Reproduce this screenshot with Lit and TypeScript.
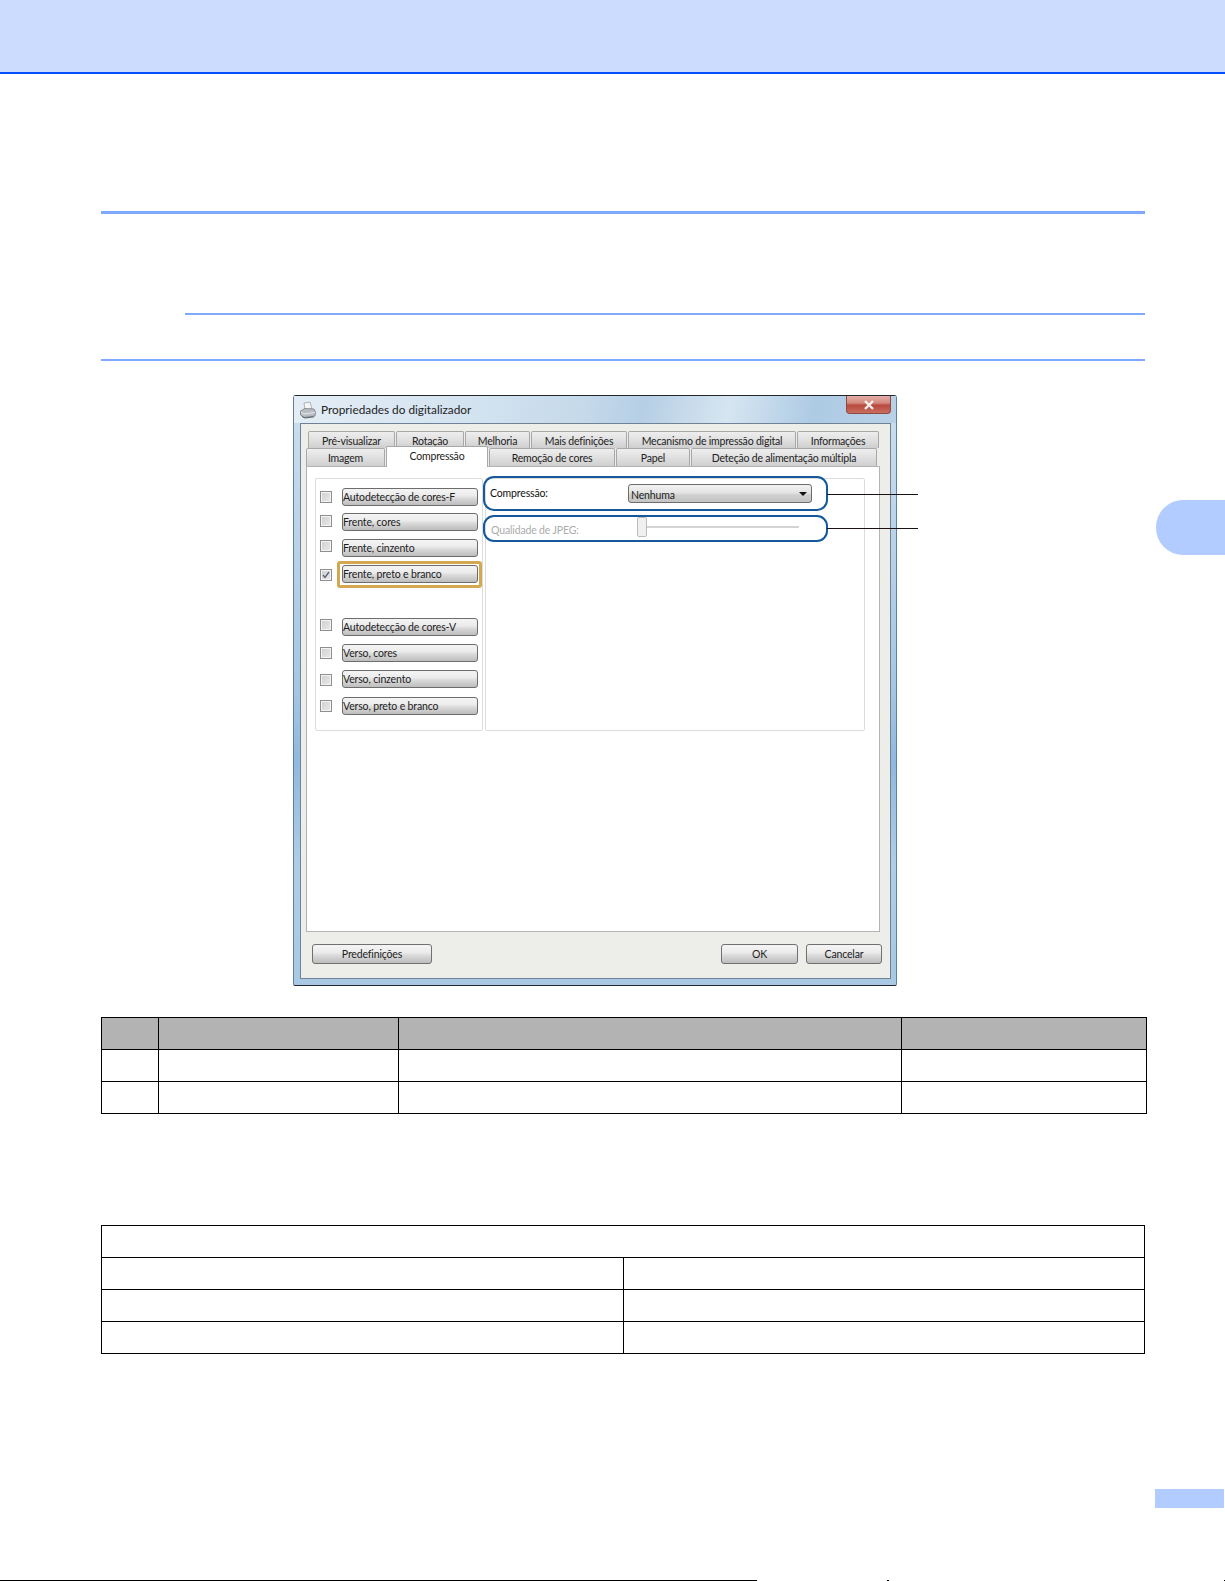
import { LitElement, html, css, svg } from "lit";
import { customElement } from "lit/decorators.js";

const row1 = [
  ["Pré-visualizar", 87], ["Rotação", 68], ["Melhoria", 65], ["Mais definições", 96], ["Mecanismo de impressão digital", 168], ["Informações", 82],
] as const;
const row2 = [
  ["Imagem", 79], ["Compressão", 102], ["Remoção de cores", 126], ["Papel", 74], ["Deteção de alimentação múltipla", 186],
] as const;
/* label, checked, focused, space under the row, nudge of the checkbox */
const options = [
  ["Autodetecção de cores-F", false, false, 7, 0],
  ["Frente, cores", false, false, 8, -1],
  ["Frente, cinzento", false, false, 8, -2],
  ["Frente, preto e branco", true, true, 35, 1],
  ["Autodetecção de cores-V", false, false, 8, -2],
  ["Verso, cores", false, false, 8, 0],
  ["Verso, cinzento", false, false, 9, 1],
  ["Verso, preto e branco", false, false, 0, 0],
] as const;

@customElement("app-root")
export class AppRoot extends LitElement {
  static styles = css`
    :host { display: block; width: 1225px; height: 1581px; background: #fff; overflow: hidden; font-family: "Lato", "Open Sans", "Liberation Sans", sans-serif; color: #111; }
    .page { position: relative; display: flex; flex-direction: column; height: 1581px; }
    .top { height: 72px; background: #ccdcff; border-bottom: 2px solid #0050ff; flex: none; }
    .rule { background: #80a8ff; flex: none; margin-left: 101px; width: 1044px; }
    .r1 { height: 3px; margin-top: 137px; }
    .r2 { height: 2px; margin-top: 99px; margin-left: 185px; width: 960px; }
    .r3 { height: 2px; margin-top: 44px; }
    .side { position: absolute; left: 1156px; top: 500px; width: 69px; height: 55px; background: #b3ccff; border-radius: 27px 0 0 27px; }

    .dialog { position: relative; flex: none; margin: 34px 0 0 293px; width: 604px; height: 591px; box-sizing: border-box; border: 1px solid #5f7f9d; border-top-color: #23262b; border-bottom-color: #23262b; border-radius: 3px 3px 2px 2px;
      background: linear-gradient(180deg, #dbe7f1 0, #c9dcec 5%, #b5d0e7 30%, #a5c6e3 50%, #8fb9de 62%, #b0cde6 80%, #a8c8e3 100%); display: flex; flex-direction: column; }
    .titlebar { height: 27px; flex: none; display: flex; align-items: center; padding-left: 5px; gap: 4px; font-size: 11.8px; color: #222;
      background: linear-gradient(102deg, #e4edf5 0, #d3e3f0 30%, #c5d9ea 48%, #b6cfe5 58%, #d6e5f1 72%, #aecbe4 86%, #b8d1e7 100%); }
    .close { position: absolute; right: 5px; top: 0; width: 45px; height: 18px; box-sizing: border-box; border: 1px solid #8c4a43; border-top: 0; border-radius: 0 0 4px 4px;
      background: linear-gradient(180deg, #e2b0a8 0, #d68a80 40%, #b84a3e 55%, #c96e60 100%); display: flex; align-items: center; justify-content: center; }
    .content { flex: 1; margin: 0 5px 6px 6px; box-sizing: border-box; border: 1px solid #6f8296; background: #edede9; display: flex; flex-direction: column; }
    .tabs { display: flex; flex: none; font-size: 10.5px; letter-spacing: -.2px; color: #222; gap: 1px; }
    .tabs.one { height: 17px; margin: 7px 0 0 7px; }
    .tabs.one .tab { padding-top: 2px; }
    .tabs.two { height: 18px; margin-left: 5px; }
    .tab { box-sizing: border-box; border: 1px solid #a8a8a8; border-bottom: 0; border-radius: 2px 2px 0 0; background: linear-gradient(180deg, #eeeeee 0, #e0e0e0 50%, #cfcfcf 100%);
      display: flex; align-items: center; justify-content: center; white-space: nowrap; }
    .tab.on { background: #fff; height: 21px; margin-top: -2px; position: relative; z-index: 1; padding-bottom: 2px; }
    .panel { width: 574px; height: 466px; box-sizing: border-box; margin-left: 5px; flex: none; border: 1px solid #b4b4b4; background: #fff; padding: 11px 0 0 8px; display: grid; grid-template-columns: 168px 380px; grid-template-rows: 253px; column-gap: 2px; align-content: start; }
    .group { box-sizing: border-box; border: 1px solid #dcdcdc; border-radius: 2px; min-width: 0; }
    .left { padding: 9px 0 0 4px; display: flex; flex-direction: column; }
    .opt { display: flex; align-items: flex-start; gap: 10px; height: 18px; }
    .check { width: 12px; height: 12px; box-sizing: border-box; border: 1px solid #8e8e8e; background: linear-gradient(135deg, #cfcfcf, #eaeaea); box-shadow: inset 0 0 0 1px #f4f4f4; display: flex; align-items: center; justify-content: center; flex: none; }
    .wrap { flex: none; width: 136px; height: 18px; position: relative; }
    .wrap.focus::before { content: ""; position: absolute; inset: -4px -4px -5px -5px; border: 3px solid #d3a84e; border-radius: 3px; }
    .btn { position: relative; box-sizing: border-box; border: 1px solid #6d6d6d; border-radius: 3px; background: linear-gradient(180deg, #f4f4f4 0, #ececec 40%, #d8d8d8 60%, #bdbdbd 100%); font-size: 10.5px; letter-spacing: -.15px; color: #1c1c1c; display: flex; align-items: center; white-space: nowrap; }
    .wrap .btn { width: 100%; height: 100%; padding: 0; }
    .right { padding: 5px 0 0 4px; display: flex; flex-direction: column; }
    .frow { display: flex; align-items: center; flex: none; letter-spacing: -.15px; }
    .frow.a { height: 19px; }
    .frow.b { height: 20px; margin-top: 14px; }
    .la { width: 138px; font-size: 10.5px; flex: none; margin-top: -2px; }
    .lb { width: 147px; font-size: 10.5px; color: #ababab; flex: none; margin-top: 6px; padding-left: 1px; box-sizing: border-box; }
    .select { width: 184px; height: 19px; box-sizing: border-box; justify-content: space-between; padding: 2px 4px 0 2px; background: linear-gradient(180deg, #f2f2f2 0, #e4e4e4 45%, #cfcfcf 60%, #c4c4c4 100%); }
    .arrow { width: 0; height: 0; border: 4px solid transparent; border-top: 4px solid #111; border-bottom: 0; margin-top: -2px; }
    .slider { display: flex; align-items: center; }
    .thumb { width: 10px; height: 20px; box-sizing: border-box; border: 1px solid #bcbcbc; border-radius: 2px; background: #f0f0f0; flex: none; }
    .track { width: 152px; height: 2px; background: #d4d4d4; }
    .foot { flex: 1; display: flex; justify-content: space-between; padding: 12px 8px 0 11px; align-items: flex-start; }
    .foot .btn { height: 20px; justify-content: center; border-color: #707070; }
    .b-right { display: flex; gap: 8px; }
    .callout { position: absolute; box-sizing: border-box; border: 2px solid #14599b; border-radius: 11px; left: 189px; width: 345px; z-index: 2; }
    .c1 { top: 80px; height: 35px; }
    .c2 { top: 119px; height: 27px; }
    .lead { position: absolute; left: 533px; width: 91px; height: 1px; background: #1a1212; z-index: 2; }
    .l1 { top: 98px; }
    .l2 { top: 132px; }

    .table { display: grid; flex: none; margin-left: 101px; border-top: 1px solid #000; border-left: 1px solid #000; }
    .t1 { margin-top: 31px; width: 1045px; grid-template-columns: 57px 240px 503px 245px; grid-auto-rows: 32px; }
    .t2 { margin-top: 111px; width: 1043px; grid-template-columns: 522px 521px; grid-auto-rows: 32px; }
    .cell { border-right: 1px solid #000; border-bottom: 1px solid #000; }
    .head { background: #b3b3b3; }
    .span { grid-column: 1 / -1; }
    .footer { margin-top: auto; display: flex; flex-direction: column; flex: none; }
    .pagetab { align-self: flex-end; width: 69px; height: 19px; margin-right: 1px; background: #b3ccff; margin-bottom: 72px; }
    .baseline { height: 1px; display: flex; }
    .baseline i { display: block; height: 1px; background: #000; }
  `;

  private printer() {
    return svg`<svg width="18" height="18" viewBox="0 0 18 18">
      <path d="M5 2 L11 1 L13 8 L6 9 Z" fill="#f4f4f4" stroke="#9a9a9a" stroke-width=".7"/>
      <path d="M1.5 10 L6 7.5 L15 8 L16.5 11 L16 15 L5 16.5 L1.5 14 Z" fill="#b9bdc2" stroke="#6c7178" stroke-width=".7"/>
      <path d="M2 11 L5 13 L16 11.5" fill="none" stroke="#e8eaec" stroke-width="1"/>
      <path d="M3 15.5 L6 17 L15 15.8" fill="none" stroke="#5d6268" stroke-width="1"/>
    </svg>`;
  }

  render() {
    return html`<div class="page">
      <div class="top"></div>
      <div class="rule r1"></div>
      <div class="rule r2"></div>
      <div class="rule r3"></div>
      <div class="side"></div>

      <div class="dialog">
        <div class="titlebar">${this.printer()}<span>Propriedades do digitalizador</span></div>
        <div class="close"><svg width="12" height="10" viewBox="0 0 12 10"><path d="M2 1 L10 9 M10 1 L2 9" stroke="#f4f0ee" stroke-width="2.4"/></svg></div>
        <div class="content">
          <div class="tabs one">${row1.map(([t, w]) => html`<div class="tab" style="width:${w}px">${t}</div>`)}</div>
          <div class="tabs two">${row2.map(([t, w]) => html`<div class="tab ${t === "Compressão" ? "on" : ""}" style="width:${w}px">${t}</div>`)}</div>
          <div class="panel">
            <div class="group left">
              ${options.map(([label, checked, focus, below, dy]) => html`<div class="opt" style="margin-bottom:${below}px">
                <span class="check" style="margin-top:${3 + dy}px">${checked
                  ? svg`<svg width="8" height="8" viewBox="0 0 8 8"><path d="M1 4 L3 6.5 L7 1" fill="none" stroke="#56637a" stroke-width="1.3"/></svg>`
                  : ""}</span>
                <div class="wrap ${focus ? "focus" : ""}"><div class="btn">${label}</div></div>
              </div>`)}
            </div>
            <div class="group right">
              <div class="frow a"><span class="la">Compressão:</span><div class="btn select"><span>Nenhuma</span><span class="arrow"></span></div></div>
              <div class="frow b"><span class="lb">Qualidade de JPEG:</span><div class="slider"><div class="thumb"></div><div class="track"></div></div></div>
            </div>
          </div>
          <div class="foot">
            <div class="btn" style="width:120px">Predefinições</div>
            <div class="b-right">
              <div class="btn" style="width:77px">OK</div>
              <div class="btn" style="width:76px">Cancelar</div>
            </div>
          </div>
        </div>
        <div class="callout c1"></div>
        <div class="callout c2"></div>
        <div class="lead l1"></div>
        <div class="lead l2"></div>
      </div>

      <div class="table t1">
        ${[0, 1, 2, 3].map(() => html`<div class="cell head"></div>`)}
        ${Array.from({ length: 8 }, () => html`<div class="cell"></div>`)}
      </div>
      <div class="table t2">
        <div class="cell span"></div>
        ${Array.from({ length: 6 }, () => html`<div class="cell"></div>`)}
      </div>

      <div class="footer">
        <div class="pagetab"></div>
        <div class="baseline"><i style="width:757px"></i><i style="width:2px;margin-left:130px"></i><i style="width:1px;margin-left:auto"></i></div>
      </div>
    </div>`;
  }
}
